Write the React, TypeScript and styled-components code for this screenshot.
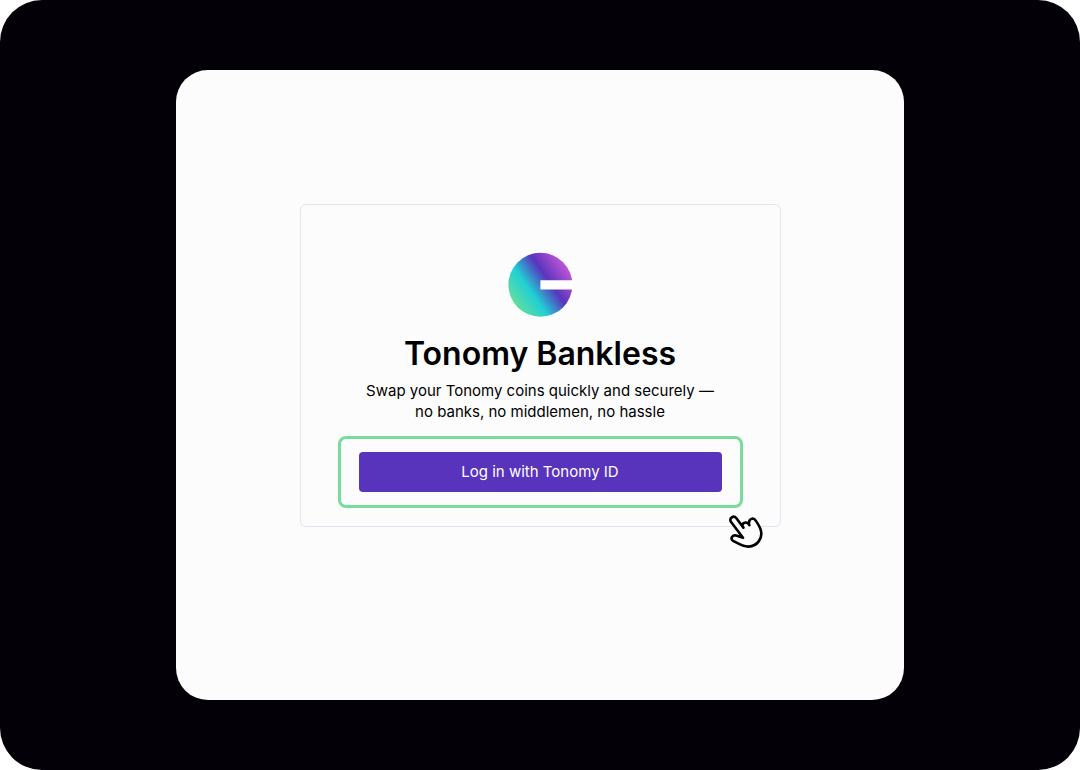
import React from "react";
import styled, { createGlobalStyle } from "styled-components";

const GlobalStyle = createGlobalStyle`
  *, *::before, *::after { box-sizing: border-box; }
  body { margin: 0; background: #fff; font-family: Inter, "Liberation Sans", sans-serif; color: #000; }
`;

const Stage = styled.main`
  display: flex;
  align-items: stretch;
  justify-content: center;
  min-height: 100vh;
  padding: 70px 24px;
  border-radius: 42px;
  background: #030007;
`;

const Panel = styled.div`
  display: flex;
  align-items: center;
  justify-content: center;
  width: 100%;
  max-width: 728px;
  padding: 24px 24px 64px;
  border-radius: 32px;
  background: #fcfcfc;
`;

const Card = styled.section`
  position: relative;
  display: flex;
  flex-direction: column;
  align-items: center;
  width: 100%;
  max-width: 481px;
  padding: 47px 37px 18px;
  border: 1px solid #dfe5f1;
  border-radius: 6px;
  text-align: center;
`;

const Logo = styled.svg`
  display: block;
  width: 66px;
  height: 66px;
`;

const Title = styled.h1`
  margin: 14px 0 0;
  font-size: 32px;
  font-weight: 600;
  line-height: 44px;
`;

const Tagline = styled.p`
  margin: 4px 0 0;
  font-size: 15px;
  line-height: 21px;
`;

const Highlight = styled.div`
  align-self: stretch;
  margin-top: 14px;
  padding: 13px 18px;
  border: 3px solid #78dc9a;
  border-radius: 8px;
`;

const LoginButton = styled.button`
  display: block;
  width: 100%;
  height: 40px;
  padding: 0 16px;
  border: 0;
  border-radius: 4px;
  background: #5833bb;
  color: #fff;
  font: 400 15px/24px Inter, "Liberation Sans", sans-serif;
  cursor: pointer;
`;

const Pointer = styled.svg`
  position: absolute;
  right: 15px;
  bottom: -24px;
  width: 40px;
  height: 40px;
`;

export default function App() {
  return (
    <>
      <GlobalStyle />
      <Stage>
        <Panel>
          <Card>
            <Logo viewBox="0 0 66 66" role="img" aria-label="Tonomy Bankless logo">
              <defs>
                <linearGradient id="brand" gradientUnits="userSpaceOnUse" x1="8" y1="51" x2="58" y2="16">
                  <stop offset="0" stopColor="#60dca0" />
                  <stop offset="0.32" stopColor="#20d0d4" />
                  <stop offset="0.66" stopColor="#5935bd" />
                  <stop offset="1" stopColor="#b652d4" />
                </linearGradient>
              </defs>
              <circle cx="33.4" cy="32.8" r="32" fill="url(#brand)" />
              <path d="M33.4 28.2H66V37.4H33.4Z" fill="#fff" />
            </Logo>
            <Title>Tonomy Bankless</Title>
            <Tagline>
              Swap your Tonomy coins quickly and securely —
              <br />
              no banks, no middlemen, no hassle
            </Tagline>
            <Highlight>
              <LoginButton type="button">Log in with Tonomy ID</LoginButton>
            </Highlight>
            <Pointer viewBox="0 0 40 40" aria-hidden="true">
              <path
                d="M18.4 17.6L11.2 8C8.6 5 3.9 8.2 5.9 11.7L18 27.8L11.2 25.6C6.8 24.4 5.2 29.2 8.2 30.9C14 34 18.5 36.8 23.5 36.6C32.5 36.2 38.2 28 35.7 19.8C34.8 16.6 32.8 13.6 30.8 10.6C28.2 6.6 22.8 10 24.6 14.4"
                fill="#fcfcfc"
              />
              <path
                d="M18.4 17.6L11.2 8C8.6 5 3.9 8.2 5.9 11.7L18 27.8L11.2 25.6C6.8 24.4 5.2 29.2 8.2 30.9C14 34 18.5 36.8 23.5 36.6C32.5 36.2 38.2 28 35.7 19.8C34.8 16.6 32.8 13.6 30.8 10.6C28.4 7 23.8 9 24.2 12.6M17.6 16.4C16.6 12.8 21.8 10.4 24.4 15.2"
                fill="none"
                stroke="#000"
                strokeWidth="2.6"
                strokeLinecap="round"
                strokeLinejoin="round"
              />
            </Pointer>
          </Card>
        </Panel>
      </Stage>
    </>
  );
}
